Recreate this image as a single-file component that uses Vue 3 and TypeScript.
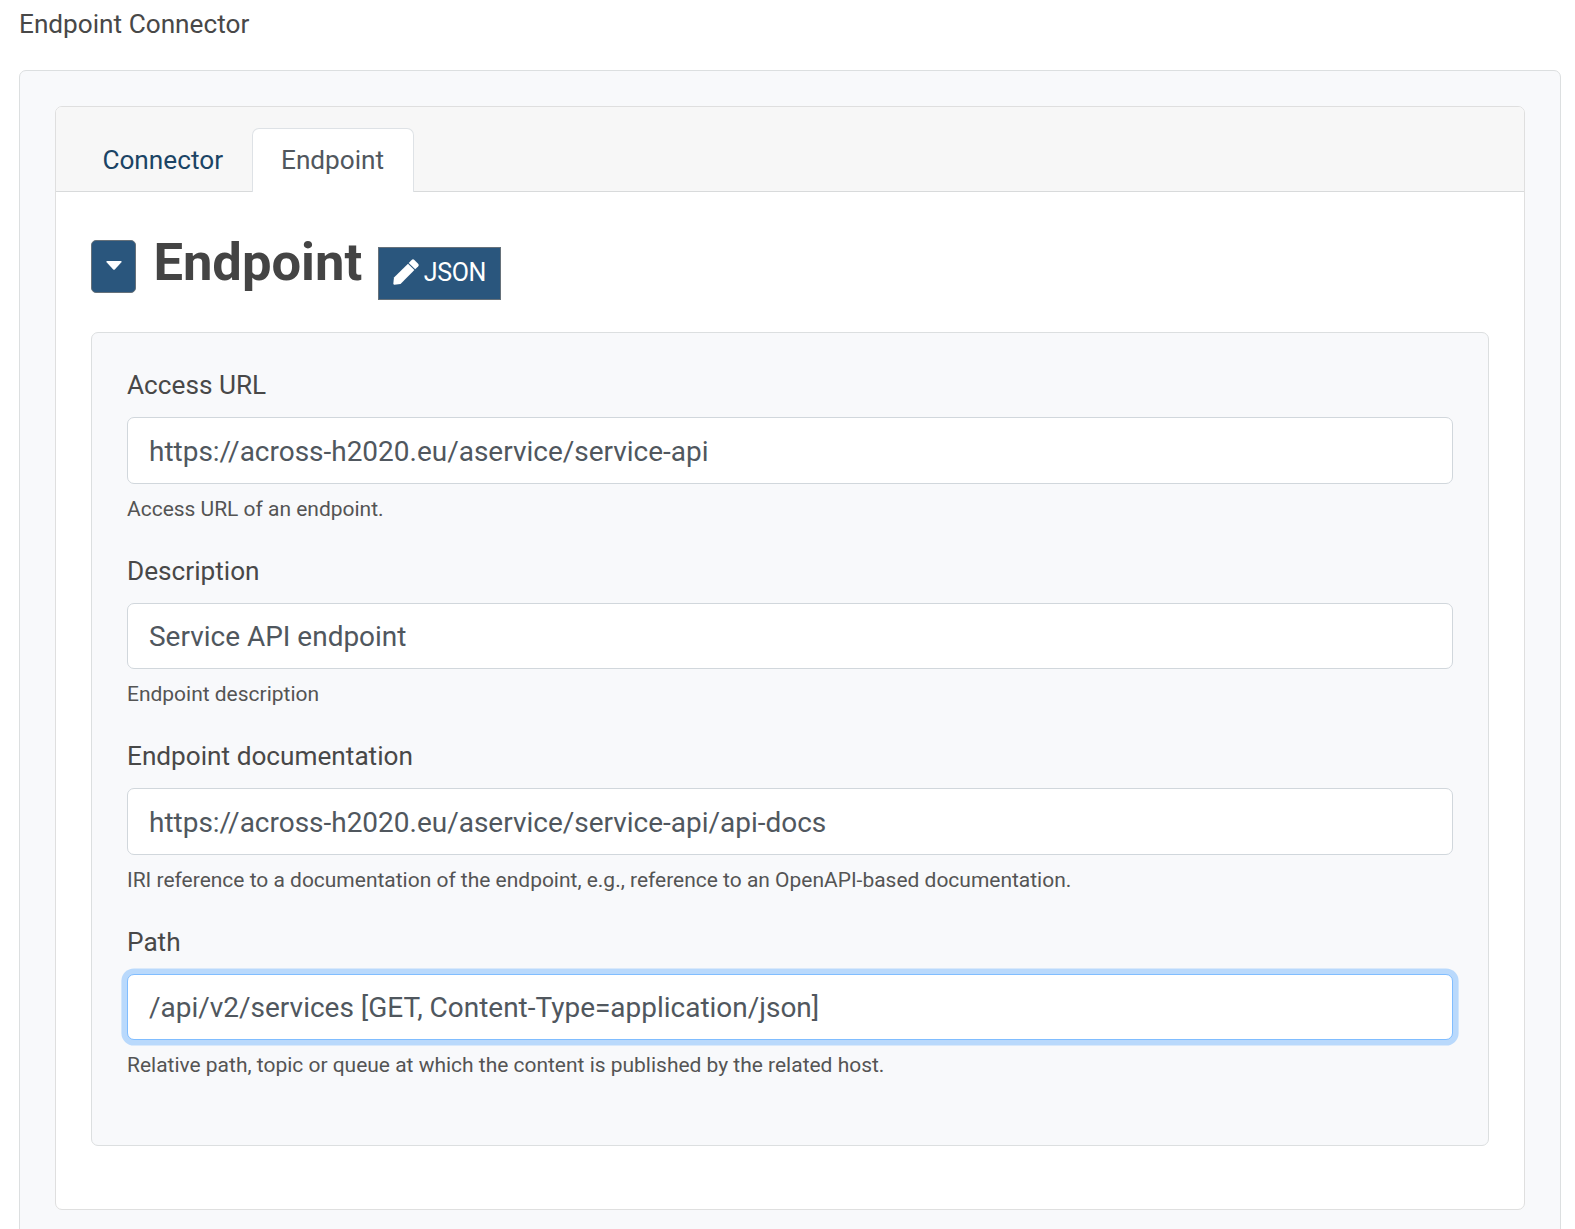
<script setup lang="ts">
import { ref } from 'vue'

interface Field {
  id: string
  label: string
  value: string
  help: string
  active?: boolean
}

const fields = ref<Field[]>([
  { id: 'access', label: 'Access URL', value: 'https://across-h2020.eu/aservice/service-api', help: 'Access URL of an endpoint.' },
  { id: 'description', label: 'Description', value: 'Service API endpoint', help: 'Endpoint description' },
  {
    id: 'documentation',
    label: 'Endpoint documentation',
    value: 'https://across-h2020.eu/aservice/service-api/api-docs',
    help: 'IRI reference to a documentation of the endpoint, e.g., reference to an OpenAPI-based documentation.',
  },
  {
    id: 'path',
    label: 'Path',
    value: '/api/v2/services [GET, Content-Type=application/json]',
    help: 'Relative path, topic or queue at which the content is published by the related host.',
    active: true,
  },
])
</script>

<template>
  <main class="page">
    <div class="page-title"><span>Endpoint Connector</span></div>
    <section class="outer">
      <div class="card">
        <nav class="tabs">
          <a class="tab"><span>Connector</span></a>
          <a class="tab active"><span>Endpoint</span></a>
        </nav>
        <div class="body">
          <header class="heading">
            <button class="toggle" type="button" aria-label="Collapse">
              <svg width="16" height="9" viewBox="0 0 16 9"><path d="M1.2 0H14.8Q16.3.2 15.2 1.6L9 8.2Q8 9.2 7 8.2L.8 1.6Q-.3.2 1.2 0Z" fill="#fff" /></svg>
            </button>
            <h1><span>Endpoint</span></h1>
            <button class="json" type="button">
              <svg width="26" height="26" viewBox="0 0 26 26" fill="#fff">
                <path d="M15 4.7 21.4 11.1 7.5 25 1.4 25.7Q.2 25.8.3 24.6L1 18.5Z" />
                <path d="M15.7 3.9 18.6 1Q20 -.3 21.4 1L25.1 4.7Q26.4 6.1 25.1 7.5L22.2 10.3Z" />
              </svg>
              <span>JSON</span>
            </button>
          </header>
          <form class="panel" @submit.prevent>
            <div v-for="f in fields" :key="f.id" class="field">
              <label :for="f.id"><span>{{ f.label }}</span></label>
              <input :id="f.id" v-model="f.value" type="text" :class="{ focused: f.active }" spellcheck="false" />
              <p><span>{{ f.help }}</span></p>
            </div>
          </form>
        </div>
      </div>
    </section>
  </main>
</template>

<style>
body {
  margin: 0;
  background: #fff;
  overflow: hidden;
}
</style>

<style scoped>
* {
  box-sizing: border-box;
}
.page {
  height: 1229px;
  overflow: hidden;
  padding: 0 14px 0 19px;
  font-family: Roboto, sans-serif;
  font-size: 26.2px;
  color: #484848;
}
.page-title {
  height: 70px;
  padding-top: 6px;
  line-height: 36px;
}
.outer {
  height: 1200px;
  padding: 35px;
  border: 1px solid #dcdfe0;
  border-radius: 7px;
  background: #f8f9fb;
}
.card {
  height: 1104px;
  border: 1px solid #dfdfdf;
  border-radius: 7px;
  background: #fff;
}
.tabs {
  display: flex;
  align-items: flex-end;
  height: 85px;
  padding-left: 17px;
  border-bottom: 1px solid #d8dadb;
  border-radius: 6px 6px 0 0;
  background: #f7f7f7;
}
.tab {
  height: 64px;
  margin-bottom: -1px;
  padding: 13px 27.6px 0 28.4px;
  border: 1px solid transparent;
  border-bottom: 0;
  border-radius: 7px 7px 0 0;
  line-height: 36px;
  color: #1b4465;
}
.tab.active {
  padding: 13px 28.6px 0 28.4px;
  border-color: #dee2e6;
  background: #fff;
  color: #50575e;
}
.body {
  padding: 48px 35px 0;
}
.heading {
  display: flex;
  align-items: flex-start;
  height: 92px;
}
button {
  display: flex;
  align-items: center;
  border: 1px solid #66717a;
  background: #2a567d;
  color: #fff;
  font: inherit;
  padding: 0;
}
.toggle {
  justify-content: center;
  width: 45px;
  height: 53px;
  border-radius: 5px;
}
.toggle svg {
  margin-top: -2px;
}
h1 {
  width: 224.6px;
  margin: -10px 0 0 17.4px;
  color: #444;
  font-size: 52.5px;
  line-height: 64px;
  font-weight: 700;
}
.json {
  width: 123px;
  height: 53px;
  margin-top: 7px;
  padding: 0 0 2px 14px;
  font-size: 25px;
  letter-spacing: -0.35px;
  gap: 4.8px;
}
.json svg {
  margin-top: -1px;
}
.panel {
  height: 814px;
  padding: 34px 35px 0;
  border: 1px solid #dcdfe0;
  border-radius: 7px;
  background: #f8f9fb;
}
.field {
  height: 185.6px;
}
label {
  display: block;
  height: 50px;
  line-height: 36px;
}
input {
  display: block;
  width: 100%;
  height: 66.5px;
  padding: 1.8px 21px 0;
  border: 1px solid #d1d7dc;
  border-radius: 7px;
  outline: 0;
  background: #fff;
  color: #50575e;
  font: 27.97px Roboto, sans-serif;
}
input.focused {
  border-color: #80bdff;
  box-shadow: 0 0 0 5.6px #b9d9fc;
}
p {
  margin: 10px 0 0;
  font-size: 20.98px;
  line-height: 30px;
  color: #545454;
  white-space: nowrap;
}
</style>
